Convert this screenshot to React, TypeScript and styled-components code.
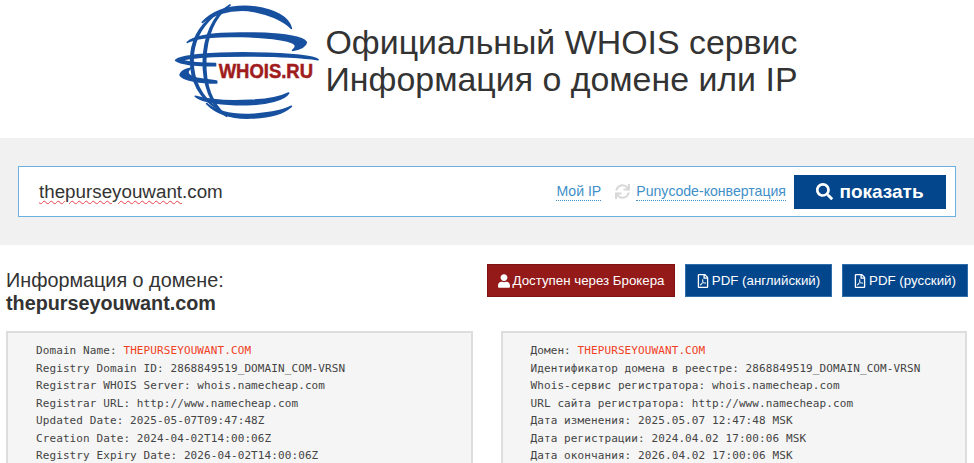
import React from "react";
import styled, { createGlobalStyle } from "styled-components";
import { FaSearch, FaUser, FaRegFilePdf, FaSync } from "react-icons/fa";

const Global = createGlobalStyle`
  html, body { margin: 0; padding: 0; background: #fff; }
  body { font-family: "Liberation Sans", Arial, sans-serif; color: #333; overflow: hidden; }
`;

const Page = styled.div`
  width: 974px;
  height: 463px;
  overflow: hidden;
`;

const Header = styled.header`
  height: 138px;
  display: flex;
  justify-content: center;
  align-items: flex-start;
  gap: 6px;
  padding: 2px 2px 0 0;
  box-sizing: border-box;
`;

const Logo = styled.svg`
  width: 145px;
  height: 116px;
  flex: none;
  overflow: visible;
`;

const Title = styled.h1`
  margin: 22px 0 0;
  font-size: 33.9px;
  line-height: 37px;
  font-weight: 400;
  color: #333;
  white-space: nowrap;
`;

const SearchBand = styled.section`
  height: 107px;
  background: #f1f1f1;
  padding: 28px 18px 0;
  box-sizing: border-box;
`;

const SearchBox = styled.div`
  width: 938px;
  height: 51px;
  box-sizing: border-box;
  background: #fff;
  border: 1px solid #6cb0e0;
  display: flex;
  align-items: center;
  padding: 0 9px 0 20px;
`;

const QueryText = styled.div`
  flex: 1;
  font-size: 18.8px;
  color: #333;
`;

const Misspelled = styled.span`
  text-decoration: underline wavy #e8404a 1px;
  text-underline-offset: 2px;
`;

const HelperLink = styled.a`
  font-size: 14.1px;
  color: #3f8fc9;
  line-height: 18px;
  border-bottom: 1px dotted #3f8fc9;
  text-decoration: none;
  white-space: nowrap;
`;

const SpinIcon = styled(FaSync)`
  width: 15px;
  height: 15px;
  color: #d8d8d8;
  margin: 0 6px 0 14px;
`;

const ShowButton = styled.button`
  width: 152px;
  height: 34px;
  margin-left: 8px;
  border: none;
  background: #03468c;
  color: #fff;
  font: bold 19px "Liberation Sans", Arial, sans-serif;
  display: flex;
  align-items: center;
  justify-content: center;
  gap: 6px;
  padding: 0;
`;

const InfoRow = styled.section`
  height: 86px;
  display: flex;
  justify-content: space-between;
  padding: 19px 6px 0 6px;
  box-sizing: border-box;
`;

const InfoTitle = styled.h2`
  margin: 5px 0 0;
  font-size: 19.8px;
  line-height: 23px;
  font-weight: 400;
  color: #333;
`;

const DomainName = styled.strong`
  display: block;
  font-weight: 700;
`;

const Actions = styled.div`
  display: flex;
  gap: 10px;
`;

const ActionButton = styled.button<{ $tone: "red" | "blue"; $width: number }>`
  width: ${(p) => p.$width}px;
  height: 33px;
  box-sizing: border-box;
  padding: 0;
  border: 1px solid ${(p) => (p.$tone === "red" ? "#7f1212" : "#2f6eab")};
  background: ${(p) => (p.$tone === "red" ? "#941a1a" : "#03468c")};
  color: #fff;
  font: 13.3px "Liberation Sans", Arial, sans-serif;
  display: flex;
  align-items: center;
  justify-content: center;
  gap: 3px;
  white-space: nowrap;
  svg { width: 12px; height: 14px; }
`;

const Panels = styled.section`
  display: flex;
  gap: 28px;
  padding: 0 7px 0 6px;
`;

const Panel = styled.pre`
  flex: 1;
  min-width: 0;
  margin: 0;
  padding: 9px 0 20px 28px;
  background: #f5f5f5;
  border: 2px solid #ddd;
  font: 11px/17.5px "DejaVu Sans Mono", "Liberation Mono", monospace;
  letter-spacing: 0.1px;
  color: #444;
  overflow: hidden;
`;

const Hit = styled.span`
  color: #f0401f;
`;

const blue = "#17509f";

const LogoMark = () => (
  <Logo viewBox="40 5 435 348" role="img" aria-label="WHOIS.RU">
    <g fill={blue} stroke={blue} strokeWidth="5" strokeLinejoin="round">
      <path d="M125 66 C165 24 225 14 285 20 C340 28 385 50 392 84 C368 60 320 38 262 30 C205 26 165 38 125 66Z" />
      <path d="M80 126 C100 106 150 98 240 98 C340 98 425 106 437 126 C435 138 418 146 396 150 C410 138 408 130 380 122 C320 108 170 102 110 116 C100 118 90 122 80 126Z" />
      <path d="M45 180 C60 166 150 156 280 158 C380 160 460 166 472 178 C430 172 350 167 260 167 C170 167 85 172 62 180 C85 186 130 190 165 190 L165 196 C110 196 60 192 45 180Z" />
      <path d="M58 224 C62 212 74 206 90 204 C76 214 78 226 110 234 C130 238 150 240 168 242 L168 248 C120 248 66 240 58 224Z" />
      <path d="M104 288 C140 298 200 304 270 300 C320 298 360 290 384 278 C372 298 320 312 260 313 C190 314 125 306 104 288Z" />
      <path d="M138 310 C170 335 220 346 280 342 C330 338 372 330 392 318 C365 342 320 352 270 353 C210 355 165 338 138 310Z" />
      <path d="M208 14 C160 50 137 110 135 180 C133 250 152 310 198 348 C150 320 126 250 128 180 C130 110 155 45 208 14Z" />
      <path d="M160 46 C112 88 97 135 97 180 C97 230 115 285 170 325 C112 290 90 235 90 180 C90 125 115 75 160 46Z" />
    </g>
    <rect x="168" y="182" width="300" height="58" fill="#fff" />
    <text x="174" y="234" fontFamily="Liberation Sans, Arial, sans-serif" fontWeight="700" fontSize="62" fill="#a01c1c" stroke="#a01c1c" strokeWidth="1.5" textLength="283" lengthAdjust="spacingAndGlyphs">WHOIS.RU</text>
  </Logo>
);

const english = [
  "Registry Domain ID: 2868849519_DOMAIN_COM-VRSN",
  "Registrar WHOIS Server: whois.namecheap.com",
  "Registrar URL: http://www.namecheap.com",
  "Updated Date: 2025-05-07T09:47:48Z",
  "Creation Date: 2024-04-02T14:00:06Z",
  "Registry Expiry Date: 2026-04-02T14:00:06Z",
];

const russian = [
  "Идентификатор домена в реестре: 2868849519_DOMAIN_COM-VRSN",
  "Whois-сервис регистратора: whois.namecheap.com",
  "URL сайта регистратора: http://www.namecheap.com",
  "Дата изменения: 2025.05.07 12:47:48 MSK",
  "Дата регистрации: 2024.04.02 17:00:06 MSK",
  "Дата окончания: 2026.04.02 17:00:06 MSK",
];

export default function App() {
  return (
    <Page>
      <Global />
      <Header>
        <LogoMark />
        <Title>
          Официальный WHOIS сервис
          <br />
          Информация о домене или IP
        </Title>
      </Header>
      <SearchBand>
        <SearchBox>
          <QueryText>
            <Misspelled>thepurseyouwant</Misspelled>.com
          </QueryText>
          <HelperLink>Мой IP</HelperLink>
          <SpinIcon />
          <HelperLink>Punycode-конвертация</HelperLink>
          <ShowButton>
            <FaSearch size={17} />
            показать
          </ShowButton>
        </SearchBox>
      </SearchBand>
      <InfoRow>
        <InfoTitle>
          Информация о домене:
          <DomainName>thepurseyouwant.com</DomainName>
        </InfoTitle>
        <Actions>
          <ActionButton $tone="red" $width={188}>
            <FaUser />
            Доступен через Брокера
          </ActionButton>
          <ActionButton $tone="blue" $width={147}>
            <FaRegFilePdf />
            PDF (английский)
          </ActionButton>
          <ActionButton $tone="blue" $width={126}>
            <FaRegFilePdf />
            PDF (русский)
          </ActionButton>
        </Actions>
      </InfoRow>
      <Panels>
        <Panel>
          {"Domain Name: "}
          <Hit>THEPURSEYOUWANT.COM</Hit>
          {"\n"}
          {english.join("\n")}
        </Panel>
        <Panel>
          {"Домен: "}
          <Hit>THEPURSEYOUWANT.COM</Hit>
          {"\n"}
          {russian.join("\n")}
        </Panel>
      </Panels>
    </Page>
  );
}
